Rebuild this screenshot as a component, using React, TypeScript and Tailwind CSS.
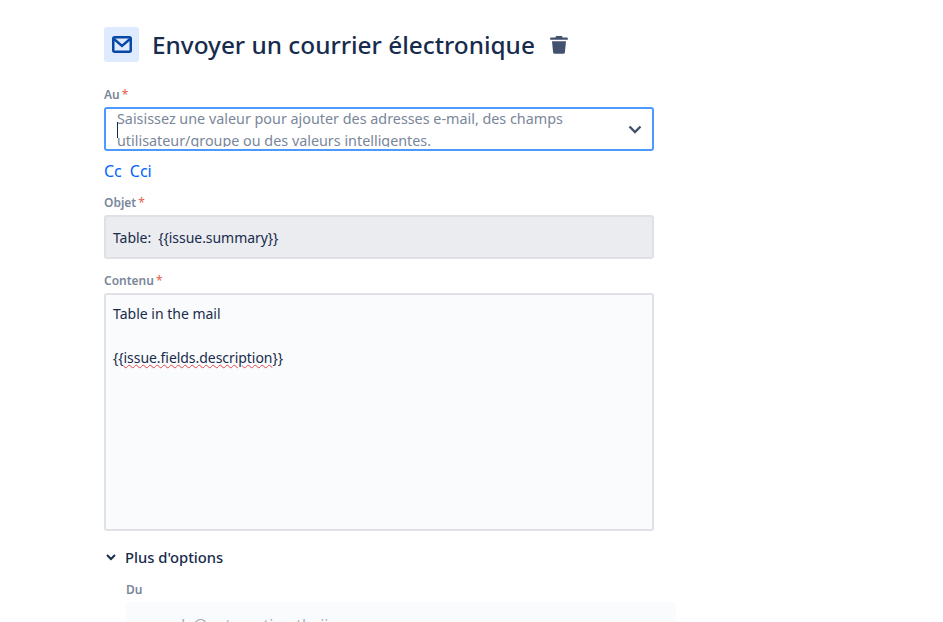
import React from "react";

function Label({ text, star = true, className = "" }: { text: string; star?: boolean; className?: string }) {
  return (
    <div className={"h-4 flex items-center text-[12px] leading-4 font-semibold text-[#7a869a] " + className}>
      {text}
      {star && <span className="ml-[2px] font-normal text-[#e5604a]">*</span>}
    </div>
  );
}

export default function App() {
  return (
    <div className="h-[622px] w-[943px] overflow-hidden bg-white pt-[27px] pl-[104px] text-[#172b4d] [font-family:'Noto_Sans',sans-serif]">
      <div className="flex h-[35px] items-center">
        <div className="flex h-[35px] w-[35px] items-center justify-center rounded-[3px] bg-[#deebff]">
          <svg width="20" height="17" viewBox="0 0 20 17" fill="none">
            <rect x="1.25" y="1.25" width="17.5" height="14.5" rx="1.5" stroke="#0747a6" strokeWidth="2.5" />
            <path d="M2 3 L10 10 L18 3" stroke="#0747a6" strokeWidth="2.4" />
          </svg>
        </div>
        <h1 className="ml-[13px] text-[24.35px] leading-[35px] font-medium">Envoyer un courrier électronique</h1>
        <svg className="ml-[14px]" width="20" height="20" viewBox="0 0 20 20" fill="#42526e">
          <path d="M7 1h6l.5 1.5H18a.8.8 0 0 1 .8.8v1.5H1.2V3.3a.8.8 0 0 1 .8-.8h4.5z" />
          <path d="M3 6.2h14l-1.1 11.2a1.6 1.6 0 0 1-1.6 1.4H5.7a1.6 1.6 0 0 1-1.6-1.4z" />
        </svg>
      </div>

      <Label text="Au" className="mt-[25px]" />
      <div className="relative mt-[4px] h-[44px] w-[550px] overflow-hidden rounded-[3px] border-2 border-[#4c9aff] bg-white">
        <div className="h-[38px] w-[490px] overflow-hidden pl-[11px]">
          <div className="-mt-px text-[14.35px] leading-[22px] text-[#7a869a]">
            Saisissez une valeur pour ajouter des adresses e-mail, des champs utilisateur/groupe ou des valeurs intelligentes.
          </div>
        </div>
        <div className="absolute left-[11px] top-[13px] h-[16px] w-px bg-[#172b4d]" />
        <svg className="absolute right-[5px] top-[8px]" width="24" height="24" viewBox="0 0 24 24" fill="none">
          <path d="M6.5 9.5 L12 15 L17.5 9.5" stroke="#42526e" strokeWidth="2.4" />
        </svg>
      </div>

      <div className="mt-[10px] flex gap-[8px] text-[16px] leading-[20px] text-[#0065ff]">
        <span>Cc</span>
        <span>Cci</span>
      </div>

      <Label text="Objet" className="mt-[14px]" />
      <div className="mt-[4px] flex h-[44px] w-[550px] items-center rounded-[3px] border-2 border-[#dfe1e6] bg-[#ebecf0] px-[7px] pt-px text-[14px] tracking-[-0.05px] whitespace-pre">
        {"Table:  {{issue.summary}}"}
      </div>

      <Label text="Contenu" className="mt-[14px]" />
      <div className="mt-[4px] h-[238px] w-[550px] rounded-[3px] border-2 border-[#dfe1e6] bg-[#fafbfc] px-[7px] pt-[8px] text-[14px] leading-[22px]">
        <div>Table in the mail</div>
        <div className="mt-[22px] tracking-[-0.05px]">
          {"{{"}
          <span className="underline decoration-wavy decoration-[#e5484d] decoration-1">issue.fields.description</span>
          {"}}"}
        </div>
      </div>

      <div className="mt-[16px] flex h-[20px] items-center text-[14.75px] font-medium">
        <svg width="14" height="14" viewBox="0 0 14 14" fill="none">
          <path d="M3 5 L7 9 L11 5" stroke="#172b4d" strokeWidth="2" />
        </svg>
        <span className="ml-[7px]">Plus d'options</span>
      </div>

      <div className="ml-[22px]">
        <Label text="Du" star={false} className="mt-[15px]" />
        <div className="mt-[4px] h-[44px] w-[550px] rounded-[3px] bg-[#fafbfc] pl-[7px] pt-[12px] text-[15.5px] leading-[22px] text-[#a5adba]">
          no-reply@automation.thejira
        </div>
      </div>
    </div>
  );
}
